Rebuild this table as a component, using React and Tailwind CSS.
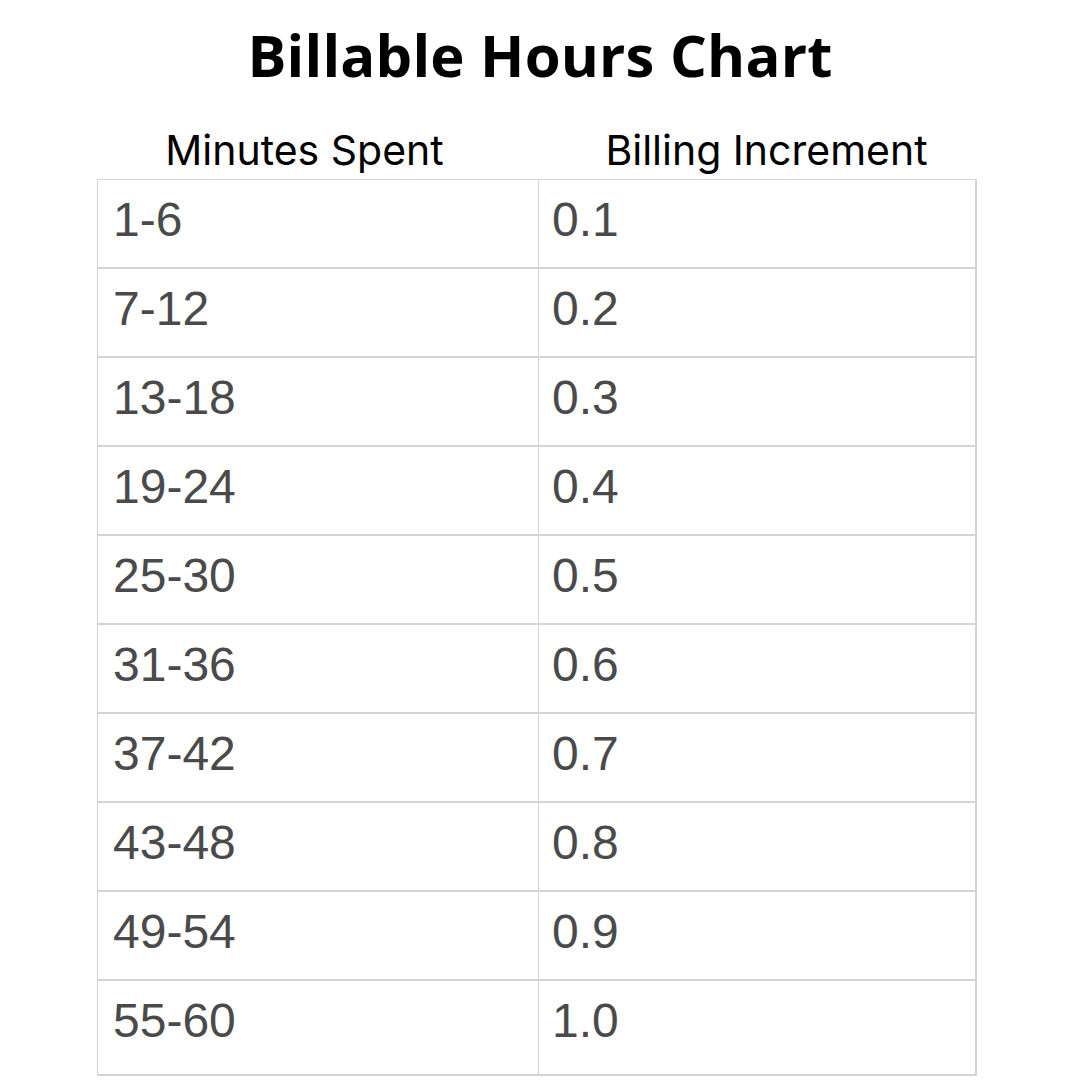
const rows = [
  ['1-6', '0.1'],
  ['7-12', '0.2'],
  ['13-18', '0.3'],
  ['19-24', '0.4'],
  ['25-30', '0.5'],
  ['31-36', '0.6'],
  ['37-42', '0.7'],
  ['43-48', '0.8'],
  ['49-54', '0.9'],
  ['55-60', '1.0'],
];

const App = () => {
  return (
    <div className="w-[1080px] h-[1080px] bg-white flex flex-col items-center overflow-hidden">
      <h1 className="mt-[19px] text-[58px] leading-[72px] font-bold text-black font-['Open_Sans',sans-serif] tracking-[0.2px]">
        Billable Hours Chart
      </h1>
      <div className="mt-[35px] ml-[-2px] w-[880px] grid grid-cols-[441px_1fr] text-[41px] leading-[48px] text-black font-['Inter',sans-serif]">
        <div className="text-center pr-[30px]">Minutes Spent</div>
        <div className="text-center pl-[14px]">Billing Increment</div>
      </div>
      <div className="mt-[5px] ml-[-6px] w-[880px] border-t border-l border-r-2 border-[#d4d4d4] font-['Liberation_Sans',sans-serif] text-[48px] text-[#4a4a4a]">
        {rows.map((row, index) => (
          <div
            key={index}
            className={`grid grid-cols-[441px_1fr] border-b-2 border-[#d4d4d4] ${index === rows.length - 1 ? 'h-[95px]' : 'h-[89px]'}`}
          >
            <div className="pl-[15px] pt-[12px] leading-[56px] border-r border-[#d4d4d4]">{row[0]}</div>
            <div className="pl-[13px] pt-[12px] leading-[56px]">{row[1]}</div>
          </div>
        ))}
      </div>
    </div>
  );
};

export default App;
